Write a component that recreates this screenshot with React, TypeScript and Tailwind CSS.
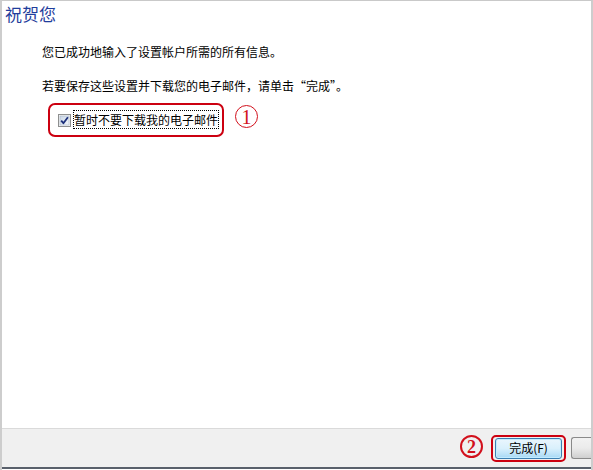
import React from "react";

const font = { fontFamily: '"Noto Sans CJK SC", "Microsoft YaHei", sans-serif' };

function Checkbox() {
  return (
    <svg width="13" height="13" viewBox="0 0 13 13" className="block">
      <defs>
        <linearGradient id="cbg" x1="0" y1="0" x2="1" y2="1">
          <stop offset="0" stopColor="#c9d6e6" />
          <stop offset="1" stopColor="#f4f7fb" />
        </linearGradient>
      </defs>
      <rect x="0.5" y="0.5" width="12" height="12" fill="#f4f4f4" stroke="#8e8f8f" />
      <rect x="2" y="2" width="9" height="9" fill="url(#cbg)" stroke="#a8b6c8" strokeWidth="0.6" />
      <path d="M3.2 6.6 L5.4 9.2 L9.9 3.2" fill="none" stroke="#1c2f7a" strokeWidth="1.8" strokeLinejoin="round" />
    </svg>
  );
}

export default function App() {
  return (
    <div
      className="relative w-[593px] h-[470px] bg-white border-t border-t-[#c9c9c9] border-l-2 border-l-[#cdcdcd] border-r-2 border-r-[#cdcdcd] flex flex-col overflow-hidden"
      style={font}
    >
      <div className="flex-1 flex flex-col">
        <div className="pl-[3px] pt-[2px] text-[17px] leading-[22px] text-[#1f3d9c]">祝贺您</div>
        <div className="pl-[40px] mt-[19px] text-[12px] leading-[16px] text-black whitespace-nowrap">
          您已成功地输入了设置帐户所需的所有信息。
        </div>
        <div className="pl-[40px] mt-[18px] text-[12px] leading-[16px] text-black whitespace-nowrap">
          若要保存这些设置并下载您的电子邮件，请单击“完成”。
        </div>
        <div className="flex items-start mt-[9px] ml-[46px]">
          <div className="w-[176px] h-[34px] border-2 border-[#cc0010] rounded-[7px] flex items-start pl-[8px] pt-[8px]">
            <div className="mt-[1px] shrink-0">
              <Checkbox />
            </div>
            <div className="ml-[2px] -mt-[3px] border border-dotted border-black h-[19px] whitespace-nowrap text-[12px] leading-[17px] text-black">
              暂时不要下载我的电子邮件
            </div>
          </div>
          <div
            className="ml-[11px] mt-[2px] w-[23px] h-[23px] rounded-full border-[1.5px] border-[#d2101c] flex items-center justify-center text-[#d2101c] text-[20px] leading-none"
            style={{ fontFamily: '"Liberation Serif", serif' }}
          >
            1
          </div>
        </div>
      </div>
      <div className="h-[41px] bg-[#f0f0f0] border-t border-t-[#dadada] border-b-2 border-b-[#59606b] flex items-center justify-end">
        <div
          className="w-[23px] h-[23px] -mt-[3px] rounded-full border-[2.5px] border-[#d2101c] flex items-center justify-center text-[#d2101c] text-[18px] font-bold leading-none"
          style={{ fontFamily: '"Liberation Serif", serif' }}
        >
          2
        </div>
        <div className="ml-[8px] w-[75px] h-[27px] border-2 border-[#cc0010] rounded-[5px] flex items-center justify-center">
          <div className="w-[67px] h-[21px] rounded-[3px] border border-[#3c7fb1] bg-gradient-to-b from-[#eaf6fd] via-[#d9f0fc] to-[#a7d9f5] shadow-[inset_0_0_0_1px_#c2ecff] flex items-center justify-center text-[12px] text-black leading-none">
            完成(F)
          </div>
        </div>
        <div className="ml-[5px] w-[40px] h-[22px] rounded-l-[3px] border border-r-0 border-[#8a8a8a] bg-gradient-to-b from-[#f2f2f2] via-[#ebebeb] to-[#cfcfcf] mr-[-20px]" />
      </div>
      <div className="h-[1px] bg-white" />
    </div>
  );
}
